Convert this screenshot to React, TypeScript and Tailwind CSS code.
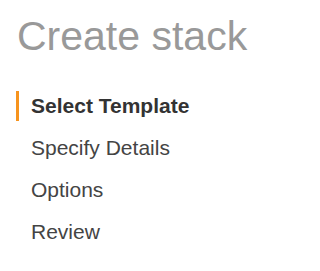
export default function App() {
  const steps = ['Select Template', 'Specify Details', 'Options', 'Review'];

  return (
    <div className="w-[265px] h-[271px] bg-white font-['Liberation_Sans',Arial,sans-serif]">
      <h1 className="pl-[17px] pt-[16px] text-[41px] leading-[41px] text-[#999999]">
        Create stack
      </h1>

      {/* Wizard steps */}
      <ul className="mt-[34px] pl-[16px] flex flex-col gap-[12px]">
        {steps.map((step, i) => (
          <li
            key={step}
            className={
              i === 0
                ? 'h-[30px] flex items-center border-l-[3px] border-[#f7941e] pl-[12px] text-[21px] font-bold text-[#333333]'
                : 'h-[30px] flex items-center pl-[15px] text-[21px] text-[#444444]'
            }
          >
            {step}
          </li>
        ))}
      </ul>
    </div>
  );
}
